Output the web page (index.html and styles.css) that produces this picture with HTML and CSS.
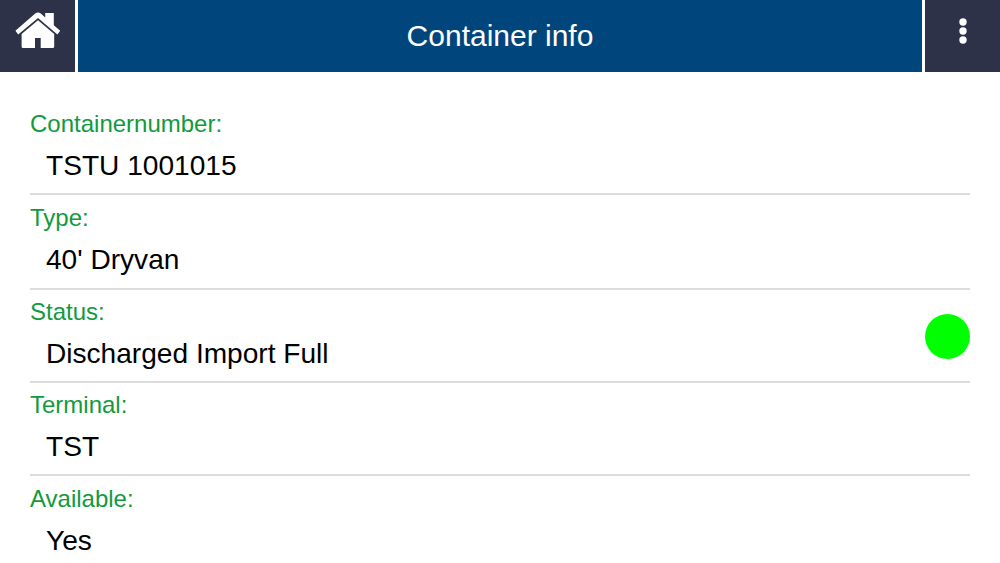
FILE: index.html
```
<!DOCTYPE html>
<html lang="en">
<head>
    <meta charset="UTF-8">
    <meta name="viewport" content="width=device-width, initial-scale=1.0">
    <title>Container info</title>
    <link rel="stylesheet" href="styles.css">
</head>
<body>
    <header class="header">
        <button class="header-btn" aria-label="Home">
            <svg class="home-icon" viewBox="0 0 46 38" width="46" height="38">
                <path d="M23 9.3 39.2 23V35.5Q39.2 37 37.7 37H25.7V27H20V37H8Q6.6 37 6.6 35.5V23Z"/>
                <path d="M30.2 2H38.8V14.2L45.2 19.8 42.4 23.6 23 7.1 3.2 23.6.4 19.8 20.2 2.6Q23 .4 25.8 2.6L30.2 6.4Z"/>
            </svg>
        </button>
        <h1 class="title">Container info</h1>
        <button class="header-btn" aria-label="Menu">
            <svg class="menu-icon" viewBox="0 0 10 28" width="10" height="28">
                <circle cx="5" cy="5" r="3.7"/>
                <circle cx="5" cy="14" r="3.7"/>
                <circle cx="5" cy="23" r="3.7"/>
            </svg>
        </button>
    </header>

    <main class="info-list">
        <div class="info-row">
            <div class="info">
                <div class="label">Containernumber:</div>
                <div class="value">TSTU 1001015</div>
            </div>
        </div>
        <div class="info-row">
            <div class="info">
                <div class="label">Type:</div>
                <div class="value">40' Dryvan</div>
            </div>
        </div>
        <div class="info-row">
            <div class="info">
                <div class="label">Status:</div>
                <div class="value">Discharged Import Full</div>
            </div>
            <div class="status-light"></div>
        </div>
        <div class="info-row">
            <div class="info">
                <div class="label">Terminal:</div>
                <div class="value">TST</div>
            </div>
        </div>
        <div class="info-row">
            <div class="info">
                <div class="label">Available:</div>
                <div class="value">Yes</div>
            </div>
        </div>
    </main>
</body>
</html>
```
FILE: styles.css
```
:root {
    --header-color: #00467d;
    --button-color: #2e3248;
    --label-color: #129a3c;
    --line-color: #dcdcdc;
    --status-color: #00ff00;
}

* {
    margin: 0;
    padding: 0;
    box-sizing: border-box;
}

body {
    font-family: Arial, "Liberation Sans", sans-serif;
    background-color: #fff;
    color: #000;
    height: 100vh;
    overflow: hidden;
}

.header {
    display: grid;
    grid-template-columns: 75px 1fr 75px;
    gap: 3px;
    height: 72px;
}

.header-btn {
    display: flex;
    justify-content: center;
    align-items: center;
    background-color: var(--button-color);
    border: none;
    padding-bottom: 10px;
    cursor: pointer;
}

.header-btn svg {
    fill: #fff;
}

.home-icon {
    margin-bottom: 2px;
}

.title {
    background-color: var(--header-color);
    color: #fff;
    font-size: 30px;
    font-weight: normal;
    line-height: 72px;
    text-align: center;
}

.info-list {
    padding: 30px 30px 0;
}

.info-row {
    display: flex;
    justify-content: space-between;
    align-items: center;
    height: 93px;
    border-bottom: 2px solid var(--line-color);
}

.info-row:nth-child(3n + 2) {
    height: 95px;
}

.info {
    margin-bottom: 3px;
}

.label {
    color: var(--label-color);
    font-size: 24px;
    line-height: 28px;
}

.value {
    font-size: 28.1px;
    line-height: 32px;
    margin-top: 12px;
    padding-left: 16px;
}

.status-light {
    width: 45px;
    height: 45px;
    margin-top: 2px;
    border-radius: 50%;
    background-color: var(--status-color);
}
```
